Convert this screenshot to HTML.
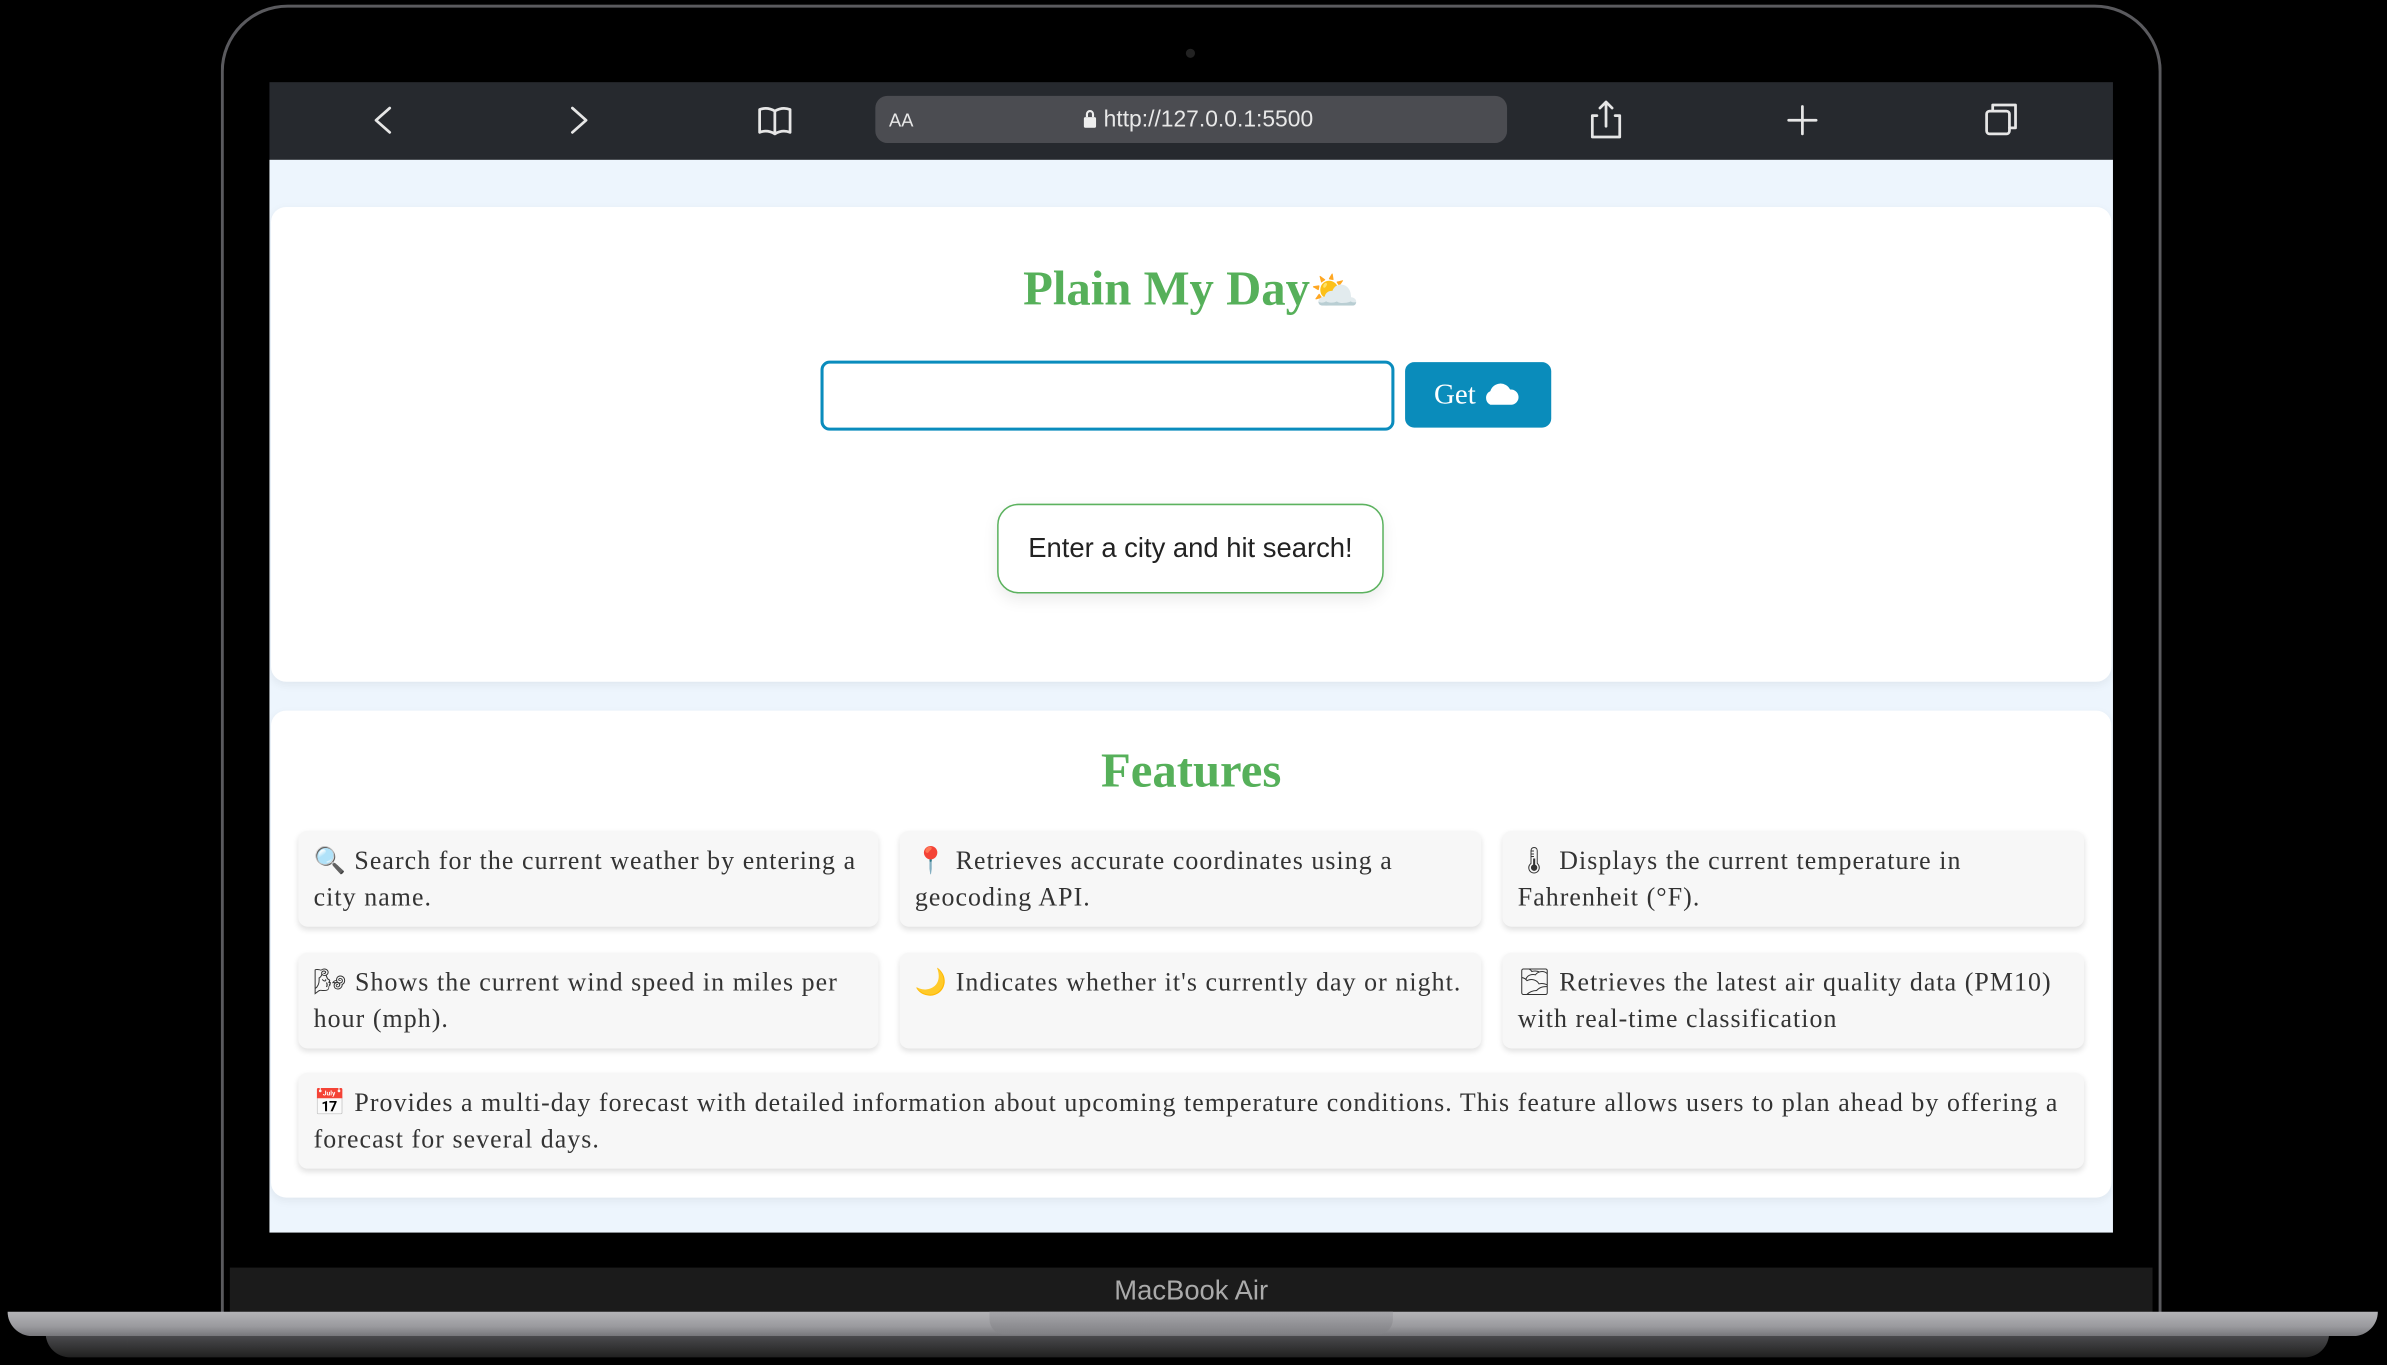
<!DOCTYPE html>
<html><head><meta charset="utf-8"><style>
*{margin:0;padding:0;box-sizing:border-box}
html,body{width:2387px;height:1365px;overflow:hidden;background:#000}
#w{position:absolute;left:0;top:0;width:1568px;height:897px;transform:scale(1.5223,1.5217);transform-origin:0 0;font-family:"Liberation Serif",serif}
.abs{position:absolute}
.lid{left:145px;top:3px;width:1275px;height:866px;border:2px solid #5a5a5e;border-bottom:none;border-radius:44px 44px 0 0;background:#000}
.bar{left:177px;top:54px;width:1211px;height:51px;background:#26292e}
.url{left:575px;top:63px;width:415px;height:31px;background:#4b4c51;border-radius:8px;color:#e8e8e8;font-family:"Liberation Sans",sans-serif}
.page{left:177px;top:105px;width:1211px;height:705px;background:#edf5fd}
.card{background:#fff;border-radius:10px;box-shadow:0 2px 6px rgba(0,0,0,.06)}
.feat{position:absolute;background:#f7f7f7;border-radius:6px;box-shadow:0 2px 4px rgba(0,0,0,.12);padding:8px 10px;font-size:17px;line-height:24px;color:#333;letter-spacing:0.7px}
.g{color:#56b05a;font-weight:bold;text-align:center;position:absolute;width:100%}
.chin{left:151px;top:833px;width:1263px;height:30px;background:#1b1b1b;color:#aaa;font-family:"Liberation Sans",sans-serif;font-size:18px;text-align:center;line-height:31px}
.base{left:5px;top:862px;width:1557px;height:16px;background:linear-gradient(#b4b4b7,#9a9a9e 60%,#77777b);border-radius:0 0 30px 30px}
.notch{left:650px;top:862px;width:265px;height:15px;background:linear-gradient(#a6a6aa,#808084);border-radius:0 0 10px 10px}
.shadow{left:30px;top:876px;width:1500px;height:16px;background:linear-gradient(#505053,#202020);border-radius:0 0 60px 60px}
</style></head><body><div id="w">
<div class="abs lid"></div>
<div class="abs" style="left:779px;top:32px;width:6px;height:6px;border-radius:50%;background:#222"></div>
<div class="abs bar"></div>
<svg class="abs" style="left:177px;top:54px" width="1211" height="51" fill="none" stroke="#e6e6e6" stroke-width="1.8" stroke-linecap="round" stroke-linejoin="round">
<path d="M79 17 L70 25 L79 33"/>
<path d="M199 17 L208 25 L199 33"/>
<path d="M322 18 Q327 16 332 19 Q337 16 342 18 V33 Q337 31 332 34 Q327 31 322 33 Z M332 19 V34"/>
<path d="M791 17 A9 9 0 1 0 801 22 M795 14 L801 17 L798 22"/>
<path d="M872 22 H869 V36 H887 V22 H884 M878 29 V13 M874 17 L878 13 L882 17"/>
<path d="M1007 16 V34 M998 25 H1016"/>
<rect x="1128" y="19" width="15" height="15" rx="2"/><path d="M1132 19 V15 H1147 V30 H1143"/>
</svg>
<div class="abs url"><span class="abs" style="left:9px;top:9px;font-size:12px">AA</span>
<span class="abs" style="left:136px;top:7px;font-size:15px"><svg width="10" height="12" style="vertical-align:-1px;margin-right:4px"><rect x="1" y="5" width="8" height="7" rx="1" fill="#eee"/><path d="M3 5 V3 A2 2 0 0 1 7 3 V5" stroke="#eee" stroke-width="1.4" fill="none"/></svg>http://127.0.0.1:5500</span></div>
<div class="abs page"></div>
<div class="abs card" style="left:178px;top:136px;width:1209px;height:312px">
<div class="g" style="top:35px;font-size:32px">Plain My Day<span style="font-size:26px">⛅</span></div>
<div class="abs" style="left:361px;top:101px;width:377px;height:46px;border:2px solid #0a8cbd;border-radius:6px"></div>
<div class="abs" style="left:745px;top:102px;width:96px;height:43px;background:#0a8cbb;border-radius:6px;color:#fff;font-size:19px;line-height:43px;padding-left:19px">Get <svg width="24" height="18" style="vertical-align:-2px"><path d="M5 17 A5 5 0 0 1 5 8 A7 7 0 0 1 18 7 A5 5 0 0 1 19 17 Z" fill="#fff"/></svg></div>
<div class="abs" style="left:477px;top:195px;width:254px;height:59px;border:1.5px solid #5cb25f;border-radius:14px;box-shadow:0 4px 10px rgba(0,0,0,.08);font-family:'Liberation Sans',sans-serif;font-size:18px;color:#222;text-align:center;line-height:57px">Enter a city and hit search!</div>
</div>
<div class="abs card" style="left:178px;top:467px;width:1209px;height:320px">
<div class="g" style="top:21px;font-size:32px">Features</div>
<div class="feat" style="left:18px;top:79px;width:381px;height:63px">🔍 Search for the current weather by entering a city name.</div>
<div class="feat" style="left:413px;top:79px;width:382px;height:63px">📍 Retrieves accurate coordinates using a geocoding API.</div>
<div class="feat" style="left:809px;top:79px;width:382px;height:63px">🌡 Displays the current temperature in Fahrenheit (°F).</div>
<div class="feat" style="left:18px;top:159px;width:381px;height:63px">🌬 Shows the current wind speed in miles per hour (mph).</div>
<div class="feat" style="left:413px;top:159px;width:382px;height:63px">🌙 Indicates whether it's currently day or night.</div>
<div class="feat" style="left:809px;top:159px;width:382px;height:63px">🌫 Retrieves the latest air quality data (PM10) with real-time classification</div>
<div class="feat" style="left:18px;top:238px;width:1173px;height:63px">📅 Provides a multi-day forecast with detailed information about upcoming temperature conditions. This feature allows users to plan ahead by offering a forecast for several days.</div>
</div>
<div class="abs chin">MacBook Air</div>
<div class="abs shadow"></div>
<div class="abs base"></div>
<div class="abs notch"></div>
</div></body></html>
